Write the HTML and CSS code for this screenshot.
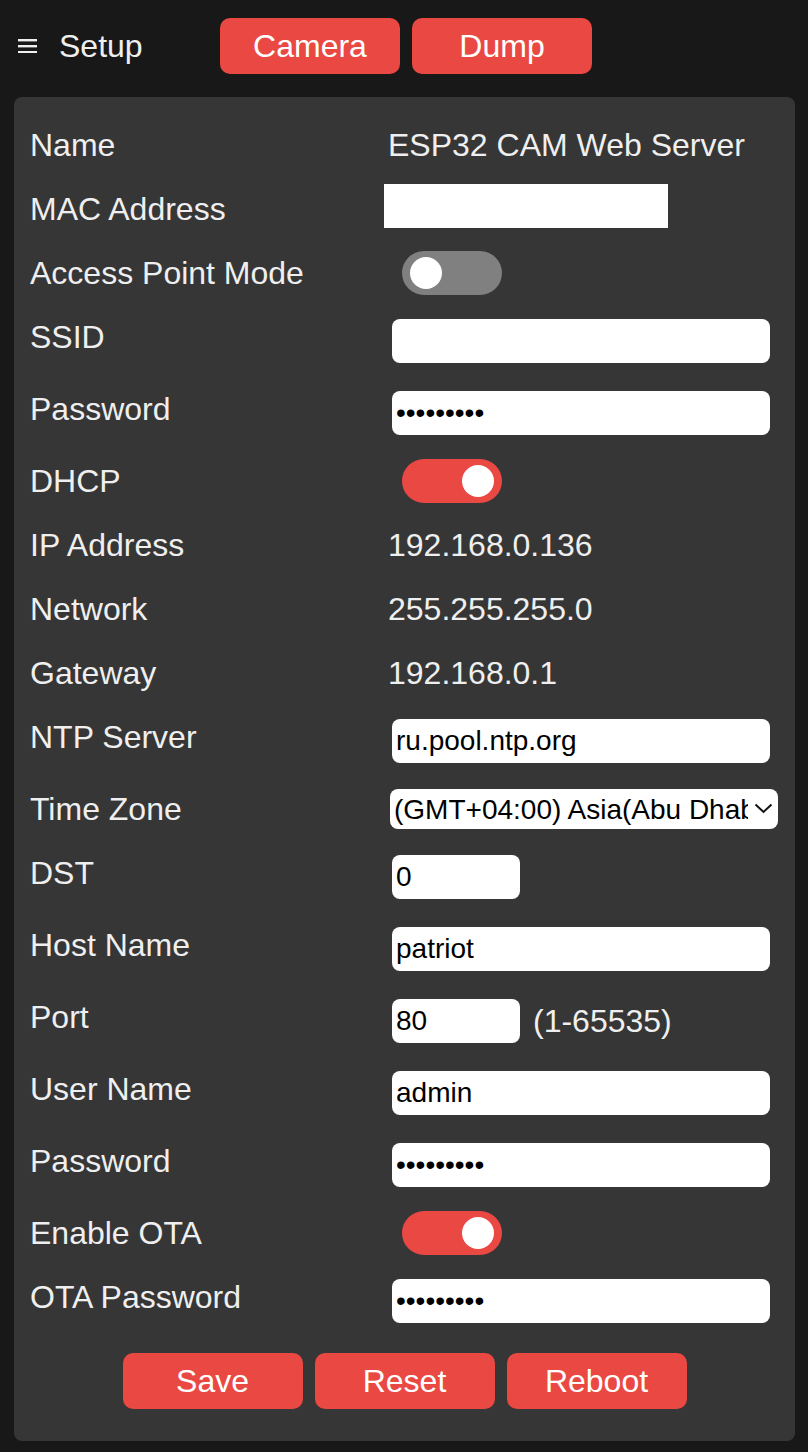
FILE: index.html
```html
<!DOCTYPE html>
<html lang="en">
<head>
<meta charset="utf-8">
<title>ESP32 CAM Setup</title>
<link rel="stylesheet" href="styles.css">
</head>
<body>
<div class="page">
  <header class="topbar">
    <div class="brand">
      <svg class="hamburger" width="19" height="14" viewBox="0 0 19 14" aria-hidden="true">
        <rect x="0" y="0" width="19" height="2.4" fill="#efefef"/>
        <rect x="0" y="6" width="19" height="2.4" fill="#efefef"/>
        <rect x="0" y="12" width="19" height="2.4" fill="#efefef"/>
      </svg>
      <span class="brand-title">Setup</span>
    </div>
    <div class="nav-buttons">
      <button class="btn">Camera</button>
      <button class="btn">Dump</button>
    </div>
  </header>

  <main class="panel">
    <div class="row"><label class="lbl">Name</label><span class="val">ESP32 CAM Web Server</span></div>
    <div class="row"><label class="lbl">MAC Address</label><span class="mac-box"></span></div>
    <div class="row"><label class="lbl">Access Point Mode</label><span class="toggle"><span class="knob"></span></span></div>
    <div class="row row-input"><label class="lbl">SSID</label><input class="field" type="text" value=""></div>
    <div class="row row-input"><label class="lbl">Password</label><input class="field" type="password" value="123456789"></div>
    <div class="row"><label class="lbl">DHCP</label><span class="toggle on"><span class="knob"></span></span></div>
    <div class="row"><label class="lbl">IP Address</label><span class="val">192.168.0.136</span></div>
    <div class="row"><label class="lbl">Network</label><span class="val">255.255.255.0</span></div>
    <div class="row"><label class="lbl">Gateway</label><span class="val">192.168.0.1</span></div>
    <div class="row row-input"><label class="lbl">NTP Server</label><input class="field" type="text" value="ru.pool.ntp.org"></div>
    <div class="row"><label class="lbl">Time Zone</label>
      <div class="select-wrap">
        <select class="select">
          <option>(GMT+04:00) Asia(Abu Dhabi, Muscat)</option>
        </select>
        <svg class="chevron" width="19" height="11" viewBox="0 0 19 11" aria-hidden="true">
          <path d="M1.5 1.5 L9.5 9 L17.5 1.5" fill="none" stroke="#111" stroke-width="2"/>
        </svg>
      </div>
    </div>
    <div class="row row-input"><label class="lbl">DST</label><input class="field short" type="text" value="0"></div>
    <div class="row row-input"><label class="lbl">Host Name</label><input class="field" type="text" value="patriot"></div>
    <div class="row row-input"><label class="lbl">Port</label>
      <div class="inline-group"><input class="field short" type="text" value="80"><span class="hint">(1-65535)</span></div>
    </div>
    <div class="row row-input"><label class="lbl">User Name</label><input class="field" type="text" value="admin"></div>
    <div class="row row-input"><label class="lbl">Password</label><input class="field" type="password" value="123456789"></div>
    <div class="row"><label class="lbl">Enable OTA</label><span class="toggle on"><span class="knob"></span></span></div>
    <div class="row row-input"><label class="lbl">OTA Password</label><input class="field" type="password" value="123456789"></div>
    <div class="actions">
      <button class="btn">Save</button>
      <button class="btn">Reset</button>
      <button class="btn">Reboot</button>
    </div>
  </main>
</div>
</body>
</html>
```
FILE: styles.css
```css
* { box-sizing: border-box; }

html, body {
  margin: 0;
  padding: 0;
  background: #181818;
}

body {
  font-family: "Liberation Sans", Arial, Helvetica, sans-serif;
  color: #efefef;
  font-size: 32px;
}

.page {
  padding: 0 13px 0 14px;
}

.topbar {
  display: flex;
  align-items: center;
  padding: 18px 0 23px;
}

.brand {
  width: 206px;
  display: flex;
  align-items: center;
  padding-left: 4px;
}

.hamburger {
  display: block;
  margin-top: -1px;
}

.brand-title {
  margin-left: 22px;
  font-size: 32px;
  line-height: 40px;
  color: #efefef;
}

.nav-buttons {
  display: flex;
  gap: 12px;
}

.btn {
  width: 180px;
  height: 56px;
  border: 0;
  border-radius: 10px;
  background: #ea4842;
  color: #ffffff;
  font-family: "Liberation Sans", Arial, Helvetica, sans-serif;
  font-size: 32px;
  padding: 0;
  cursor: pointer;
}

.panel {
  background: #363636;
  border-radius: 8px;
  padding: 26px 16px 32px;
  display: flex;
  flex-direction: column;
  gap: 20px;
}

.row {
  display: flex;
  align-items: center;
  min-height: 44px;
}

.row-input {
  min-height: 52px;
}

.lbl {
  width: 358px;
  flex: none;
  align-self: flex-start;
  line-height: 44px;
  color: #efefef;
}

.val {
  line-height: 44px;
  color: #efefef;
}

.mac-box {
  display: block;
  width: 284px;
  height: 44px;
  margin-left: -4px;
  margin-top: -6px;
  background: #ffffff;
}

.toggle {
  position: relative;
  display: flex;
  align-items: center;
  width: 100px;
  height: 44px;
  margin-left: 14px;
  border-radius: 22px;
  background: #808080;
  padding: 0 8px;
}

.toggle.on {
  background: #ea4842;
  justify-content: flex-end;
}

.knob {
  display: block;
  width: 32px;
  height: 32px;
  border-radius: 50%;
  background: #ffffff;
}

.field {
  display: block;
  width: 378px;
  height: 44px;
  margin: 0 0 0 4px;
  border: 0;
  border-radius: 8px;
  background: #ffffff;
  color: #000000;
  font-family: "Liberation Sans", Arial, Helvetica, sans-serif;
  font-size: 28px;
  padding: 0 4px;
  outline: none;
}

.field.short {
  width: 128px;
}

.inline-group {
  display: flex;
  align-items: center;
}

.hint {
  margin-left: 13px;
  color: #efefef;
}

.select-wrap {
  position: relative;
  width: 388px;
  height: 40px;
  margin-left: 2px;
}

.select {
  appearance: none;
  -webkit-appearance: none;
  display: block;
  width: 100%;
  height: 40px;
  border: 0;
  border-radius: 8px;
  background: #ffffff;
  color: #000000;
  font-family: "Liberation Sans", Arial, Helvetica, sans-serif;
  font-size: 28px;
  padding: 0 30px 0 4px;
  outline: none;
}

.chevron {
  position: absolute;
  right: 5px;
  top: 14px;
  pointer-events: none;
}

.actions {
  display: flex;
  justify-content: center;
  gap: 12px;
  margin-top: 6px;
}
```
